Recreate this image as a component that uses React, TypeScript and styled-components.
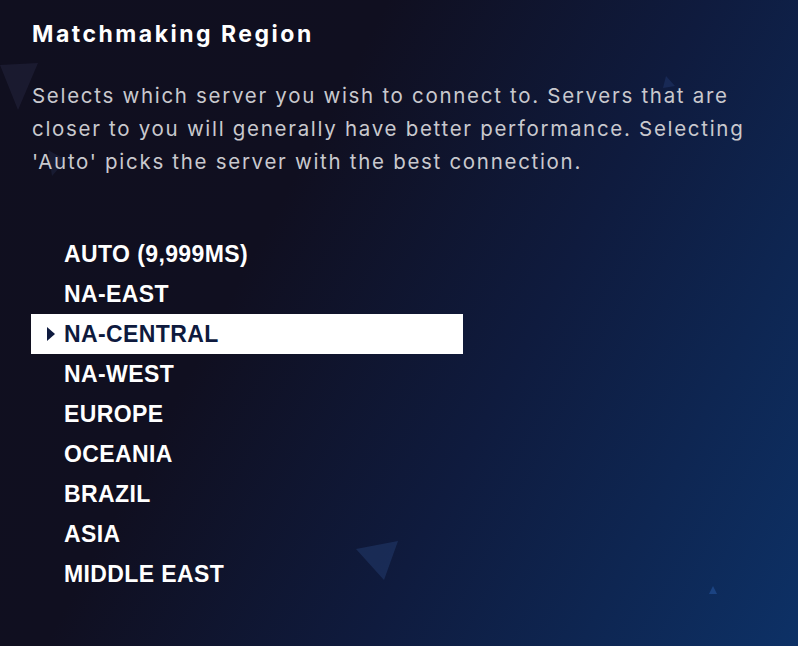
import React, { useState } from "react";
import styled, { createGlobalStyle } from "styled-components";

const GlobalStyle = createGlobalStyle`
  html, body {
    margin: 0;
    padding: 0;
    height: 100%;
  }
  body {
    background: #100f1f;
  }
`;

const regions = [
  "AUTO (9,999MS)",
  "NA-EAST",
  "NA-CENTRAL",
  "NA-WEST",
  "EUROPE",
  "OCEANIA",
  "BRAZIL",
  "ASIA",
  "MIDDLE EAST",
];

const Screen = styled.div`
  position: relative;
  width: 798px;
  height: 646px;
  overflow: hidden;
  background: linear-gradient(118deg, #100f1f 0%, #100f20 34%, #0f1b3e 62%, #0d3166 100%);
`;

const Decor = styled.svg`
  position: absolute;
  inset: 0;
  pointer-events: none;
`;

const Content = styled.div`
  position: relative;
  display: flex;
  flex-direction: column;
  padding: 20px 32px 0 31px;
`;

const Title = styled.h1`
  margin: 0 0 0 1px;
  font-family: Inter, "Liberation Sans", sans-serif;
  font-weight: 700;
  font-size: 23px;
  letter-spacing: 2.5px;
  line-height: 28px;
  color: #ffffff;
`;

const Description = styled.p`
  margin: 31px 0 0 1px;
  max-width: 740px;
  font-family: Inter, "Liberation Sans", sans-serif;
  font-weight: 400;
  font-size: 20.5px;
  letter-spacing: 1.7px;
  line-height: 33px;
  color: #c9c9ce;
`;

const RegionList = styled.ul`
  list-style: none;
  margin: 56px 0 0;
  padding: 0;
  display: flex;
  flex-direction: column;
  width: 432px;
`;

const RegionItem = styled.li<{ $active: boolean }>`
  position: relative;
  height: 40px;
  display: flex;
  align-items: center;
  padding-left: 33px;
  font-family: "Liberation Sans", Arial, sans-serif;
  font-weight: 700;
  font-size: 23px;
  letter-spacing: 0.4px;
  color: ${(p) => (p.$active ? "#0e1a3e" : "#ffffff")};
  background: ${(p) => (p.$active ? "#ffffff" : "transparent")};
  cursor: pointer;
`;

const Caret = styled.svg`
  position: absolute;
  left: 16px;
  top: 13px;
`;

export default function App() {
  const [selected, setSelected] = useState(2);

  return (
    <>
      <GlobalStyle />
      <Screen>
        <Decor width="798" height="646" viewBox="0 0 798 646">
          <polygon points="0,65 38,63 18,110" fill="#2a2a48" opacity="0.4" />
          <polygon points="48,150 66,160 52,176" fill="#232a4a" opacity="0.45" />
          <polygon points="663,88 675,86 666,76" fill="#1c2f60" opacity="0.7" />
          <polygon points="356,549 398,541 384,580" fill="#233a6c" opacity="0.55" />
          <polygon points="709,594 717,594 713,586" fill="#1f4a8c" opacity="0.8" />
        </Decor>
        <Content>
          <Title>Matchmaking Region</Title>
          <Description>
            Selects which server you wish to connect to. Servers that are closer to you will
            generally have better performance. Selecting 'Auto' picks the server with the best
            connection.
          </Description>
          <RegionList>
            {regions.map((r, i) => (
              <RegionItem key={r} $active={i === selected} onClick={() => setSelected(i)}>
                {i === selected && (
                  <Caret width="8" height="14" viewBox="0 0 8 14">
                    <polygon points="0,0 8,7 0,14" fill="#0e1a3e" />
                  </Caret>
                )}
                {r}
              </RegionItem>
            ))}
          </RegionList>
        </Content>
      </Screen>
    </>
  );
}
